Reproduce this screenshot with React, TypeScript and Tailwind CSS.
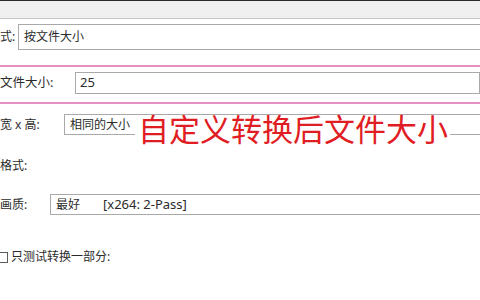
export default function App() {
  const font = "font-['Noto_Sans','Noto_Sans_CJK_SC',sans-serif]";

  return (
    <div className={`relative w-[480px] h-[300px] overflow-hidden bg-white text-[#2b2b2b] ${font}`}>
      {/* window edge + toolbar strip */}
      <div className="h-px bg-[#2a2a2a]" />
      <div className="h-[18px] bg-[#f0f0f0] border-b border-[#c6c6c6]" />

      {/* conversion mode */}
      <div className="mt-[5px] flex items-center">
        <span className="w-[18px] shrink-0 text-[12px] leading-[16px]">式:</span>
        <div className="flex-1 h-[26px] -mr-4 border border-[#a9a9a9] flex items-center pl-[5px] text-[12px]">
          按文件大小
        </div>
      </div>

      {/* highlighted target size row */}
      <div className="mt-[15px] -mx-4 px-4 border-y-2 border-[#e591c4] pt-[5px] pb-[8px] flex items-center">
        <span className="w-[75px] shrink-0 text-[12.5px] leading-[16px]">文件大小:</span>
        <div className="flex-1 h-[22px] border border-[#a9a9a9] flex items-center pl-[4px] text-[13px]">
          25
        </div>
      </div>

      {/* width x height */}
      <div className="mt-[10px] flex items-center">
        <span className="w-[64px] shrink-0 text-[12px] leading-[16px]">宽 x 高:</span>
        <div className="flex-1 h-[21px] -mr-4 border border-[#a9a9a9] flex items-center pl-[5px] text-[12px]">
          相同的大小
        </div>
      </div>

      {/* format */}
      <div className="mt-[23px] text-[12px] leading-[16px]">格式:</div>

      {/* quality */}
      <div className="mt-[20px] flex items-center">
        <span className="w-[50px] shrink-0 text-[12px] leading-[16px]">画质:</span>
        <div className="flex-1 h-[21px] -mr-4 border border-[#a9a9a9] flex items-center pl-[5px] text-[12px]">
          <span className="w-[47px]">最好</span>
          <span className="text-[13px]">[x264: 2-Pass]</span>
        </div>
      </div>

      {/* partial test */}
      <div className="mt-[34px] flex items-center gap-[3px] text-[12px] leading-[16px]">
        <span className="w-[8px] h-[11px] border border-l-0 border-[#5a5a5a] bg-white shrink-0" />
        <span>只测试转换一部分:</span>
      </div>

      {/* annotation */}
      <div className="absolute left-[135px] top-[116px] h-[27px] bg-white pl-[3px] pr-[2px] text-[31px] leading-[27px] text-[#e11d24]">
        自定义转换后文件大小
      </div>
    </div>
  );
}
